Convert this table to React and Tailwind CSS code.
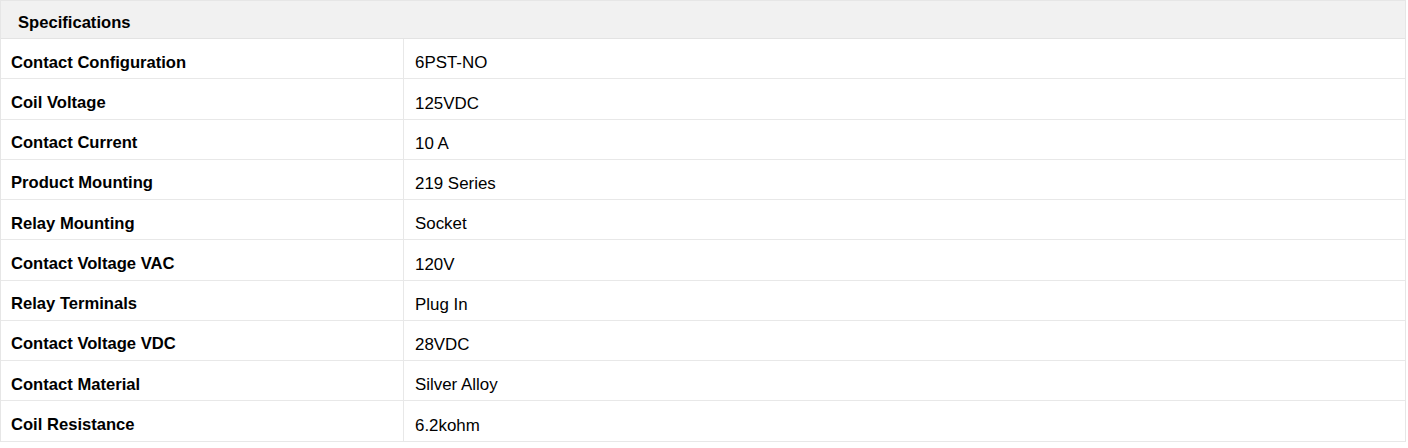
import React from 'react';

const specs = [
    ['Contact Configuration', '6PST-NO'],
    ['Coil Voltage', '125VDC'],
    ['Contact Current', '10 A'],
    ['Product Mounting', '219 Series'],
    ['Relay Mounting', 'Socket'],
    ['Contact Voltage VAC', '120V'],
    ['Relay Terminals', 'Plug In'],
    ['Contact Voltage VDC', '28VDC'],
    ['Contact Material', 'Silver Alloy'],
    ['Coil Resistance', '6.2kohm'],
];

const App = () => {
    return (
        <div className="w-[1408px] h-[448px] bg-white font-['Liberation_Sans',Arial,sans-serif] text-[16.6px] text-black">
            <div className="w-[1406px] border border-[#e6e6e6] border-b-0">
                <div className="h-[38px] bg-[#f1f1f1] border-b border-[#e3e3e3] flex items-center pt-[8px] px-[17px] font-bold">
                    Specifications
                </div>
                {specs.map(([label, value]) => (
                    <div key={label} className="h-[40.25px] flex border-b border-[#e8e8e8]">
                        <div className="w-[403px] shrink-0 flex items-center pt-[9px] pl-[10px] font-bold border-r border-[#e8e8e8]">
                            {label}
                        </div>
                        <div className="flex-1 flex items-center pt-[9px] pl-[11px] text-[16.9px]">{value}</div>
                    </div>
                ))}
            </div>
        </div>
    );
};

export default App;
